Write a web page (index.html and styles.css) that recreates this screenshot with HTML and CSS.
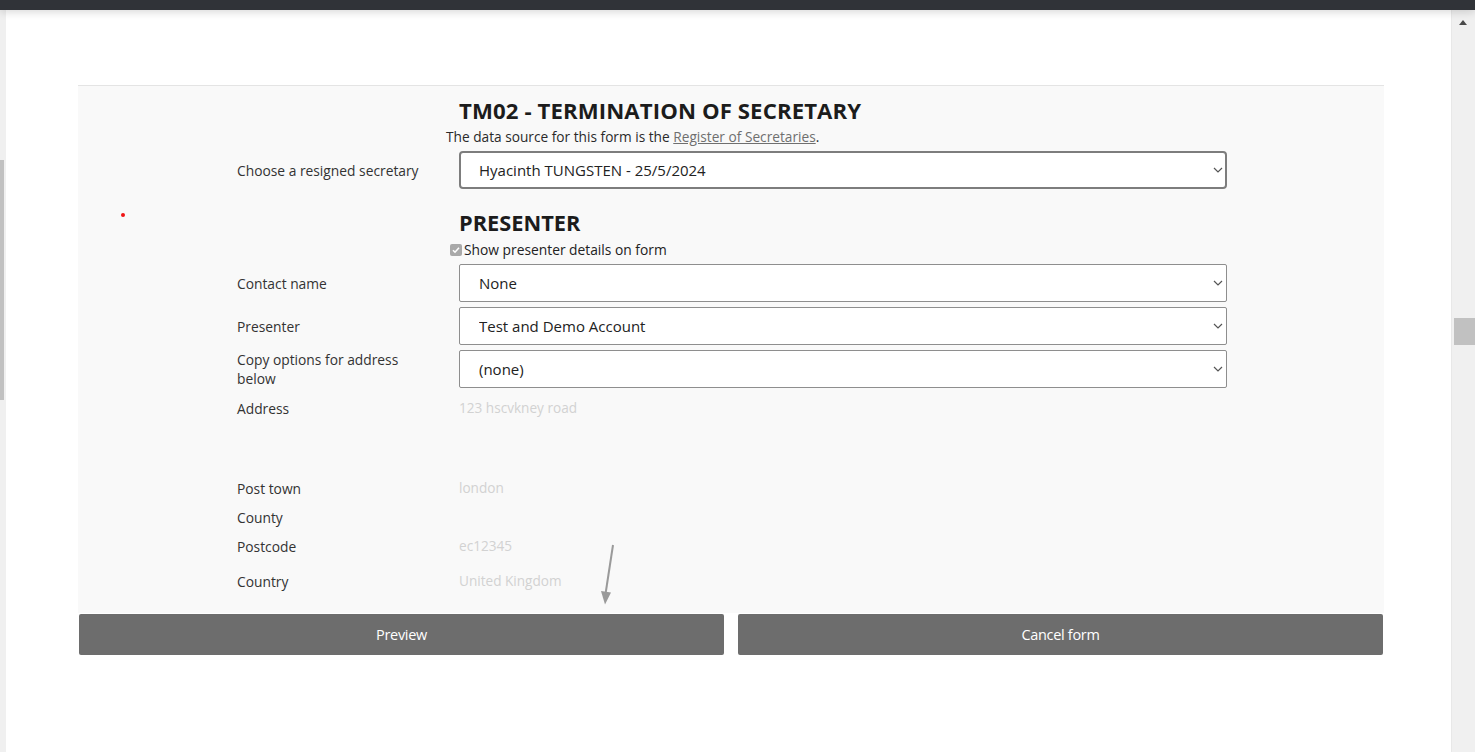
FILE: index.html
```html
<!DOCTYPE html>
<html lang="en">
<head>
<meta charset="utf-8">
<title>TM02 - Termination of Secretary</title>
<link rel="stylesheet" href="styles.css">
</head>
<body>
<div class="topbar"></div>
<div class="frame">
  <div class="leftstrip"><div class="leftthumb"></div></div>
  <main class="main">
    <span class="reddot"></span>
    <section class="panel">
      <div class="grid">
        <div></div>
        <div class="head">
          <h1 class="title">TM02 - TERMINATION OF SECRETARY</h1>
          <p class="source">The data source for this form is the <a href="#" class="srclink">Register of Secretaries</a>.</p>
        </div>

        <label class="lbl row-sec">Choose a resigned secretary</label>
        <div class="field row-sec">
          <div class="selwrap sel-focus">
            <select class="sel"><option>Hyacinth TUNGSTEN - 25/5/2024</option></select>
            <svg class="chev" width="10" height="6" viewBox="0 0 10 6"><path d="M1 1l4 4 4-4" fill="none" stroke="#555" stroke-width="1.2"/></svg>
          </div>
        </div>

        <div></div>
        <div class="presenter">
          <h2 class="subhead">PRESENTER</h2>
          <div class="check"><span class="box"><svg width="10" height="10" viewBox="0 0 10 10"><path d="M2 5.2l2 2 4-4.4" fill="none" stroke="#fff" stroke-width="1.6"/></svg></span>Show presenter details on form</div>
        </div>

        <label class="lbl row-first">Contact name</label>
        <div class="field row-first">
          <div class="selwrap">
            <select class="sel"><option>None</option></select>
            <svg class="chev" width="10" height="6" viewBox="0 0 10 6"><path d="M1 1l4 4 4-4" fill="none" stroke="#555" stroke-width="1.2"/></svg>
          </div>
        </div>

        <label class="lbl row-next">Presenter</label>
        <div class="field row-next">
          <div class="selwrap">
            <select class="sel"><option>Test and Demo Account</option></select>
            <svg class="chev" width="10" height="6" viewBox="0 0 10 6"><path d="M1 1l4 4 4-4" fill="none" stroke="#555" stroke-width="1.2"/></svg>
          </div>
        </div>

        <label class="lbl row-next">Copy options for address<br>below</label>
        <div class="field row-next">
          <div class="selwrap">
            <select class="sel"><option>(none)</option></select>
            <svg class="chev" width="10" height="6" viewBox="0 0 10 6"><path d="M1 1l4 4 4-4" fill="none" stroke="#555" stroke-width="1.2"/></svg>
          </div>
        </div>

        <div class="lbl row-addr">Address</div>
        <div class="val row-addr">123 hscvkney road</div>

        <div class="lbl row-town">Post town</div>
        <div class="val row-town">london</div>

        <div class="lbl row-small">County</div>
        <div class="val row-small"></div>

        <div class="lbl row-small">Postcode</div>
        <div class="val row-small">ec12345</div>

        <div class="lbl row-country">Country</div>
        <div class="val row-country">United Kingdom</div>
      </div>
      <svg class="arrow" width="20" height="62" viewBox="0 0 20 62"><path d="M14 1L6.5 50" stroke="#9a9a9a" stroke-width="2" fill="none"/><path d="M2 47l10 1.5-6 12z" fill="#9a9a9a"/></svg>
    </section>
    <div class="actions">
      <button class="btn">Preview</button>
      <button class="btn">Cancel form</button>
    </div>
  </main>
  <div class="scrollbar">
    <span class="uparrow"></span>
    <span class="thumb"></span>
  </div>
</div>
</body>
</html>
```

FILE: styles.css
```css
* { box-sizing: border-box; }
html, body { margin: 0; padding: 0; }
body {
  width: 1475px;
  height: 752px;
  overflow: hidden;
  background: #ffffff;
  font-family: "Open Sans", "Noto Sans", sans-serif;
  color: #333333;
}
.topbar {
  height: 10px;
  background: #303338;
  position: relative;
  z-index: 2;
  box-shadow: 0 2px 9px rgba(0, 0, 0, 0.16);
}
.frame {
  display: flex;
  height: 742px;
}
.leftstrip {
  width: 6px;
  background: #f0f0f0;
  padding-top: 150px;
}
.leftthumb {
  width: 4px;
  height: 240px;
  background: #c1c1c1;
}
.main {
  width: 1445px;
  position: relative;
  padding-top: 75px;
}
.reddot {
  position: absolute;
  z-index: 3;
  left: 115px;
  top: 203px;
  width: 4px;
  height: 4px;
  border-radius: 50%;
  background: #f01414;
}
.panel {
  position: relative;
  margin-left: 72px;
  width: 1306px;
  height: 528px;
  background: #f9f9f9;
  border-top: 1px solid #e4e4e4;
  padding: 10px 0 0 159px;
}
.grid {
  display: grid;
  grid-template-columns: 209px 781px;
  align-items: center;
}
.title {
  margin: 0 0 0 13px;
  font-size: 22.2px;
  line-height: 30px;
  font-weight: 700;
  color: #1c1c1c;
  letter-spacing: 0.1px;
}
.source {
  margin: 1px 0 0 0;
  font-size: 13.7px;
  line-height: 20px;
  color: #2a2a2a;
}
.srclink {
  color: #6f6f6f;
  text-decoration: underline;
}
.lbl {
  font-size: 13.8px;
  line-height: 19px;
  color: #333333;
}
.row-sec { margin-top: 4px; }
.row-first { margin-top: 4px; }
.row-next { margin-top: 5px; }
.selwrap {
  position: relative;
  margin-left: 13px;
  width: 768px;
  height: 38px;
}
.sel {
  appearance: none;
  -webkit-appearance: none;
  width: 100%;
  height: 100%;
  background: #ffffff;
  border: 1px solid #8e8e8e;
  border-radius: 2px;
  padding: 0 0 0 19px;
  font-family: "Open Sans", "Noto Sans", sans-serif;
  font-size: 15px;
  color: #222222;
  outline: none;
}
.sel-focus .sel {
  border: 2px solid #7d7d7d;
  border-radius: 4px;
  padding-left: 18px;
}
.chev {
  position: absolute;
  right: 4px;
  top: 16px;
  pointer-events: none;
}
.presenter {
  margin-top: 20px;
}
.subhead {
  margin: 0 0 0 13px;
  font-size: 21.8px;
  line-height: 28px;
  font-weight: 700;
  color: #1c1c1c;
}
.check {
  margin: 3px 0 0 4px;
  display: flex;
  align-items: center;
  font-size: 13.8px;
  line-height: 20px;
  color: #222222;
}
.box {
  width: 12px;
  height: 12px;
  border-radius: 2px;
  background: #a9a9a9;
  margin-right: 2px;
  display: inline-flex;
  align-items: center;
  justify-content: center;
}
.val {
  margin-left: 13px;
  font-size: 13.6px;
  line-height: 20px;
  color: #d2d2d2;
  min-height: 20px;
}
.row-addr { margin-top: 10px; }
.row-town { margin-top: 60px; }
.row-small { margin-top: 9px; }
.row-country { margin-top: 15px; }
.arrow {
  position: absolute;
  left: 521px;
  top: 458px;
}
.actions {
  display: flex;
  gap: 14px;
  margin: 1px 0 0 73px;
  width: 1304px;
}
.btn {
  flex: 1;
  height: 41px;
  border: none;
  border-radius: 2px;
  background: #6d6d6d;
  color: #ffffff;
  font-family: "Liberation Sans Narrow", "Open Sans", sans-serif;
  font-size: 14.5px;
  letter-spacing: -0.3px;
  cursor: pointer;
}
.scrollbar {
  width: 24px;
  background: #f0f0f0;
  border-left: 1px solid #e8e8e8;
  position: relative;
}
.uparrow {
  position: absolute;
  left: 7px;
  top: 10px;
  width: 0;
  height: 0;
  border-left: 4px solid transparent;
  border-right: 4px solid transparent;
  border-bottom: 5px solid #4a4a4a;
}
.thumb {
  position: absolute;
  left: 2px;
  top: 308px;
  width: 21px;
  height: 27px;
  background: #c1c1c1;
}
```
